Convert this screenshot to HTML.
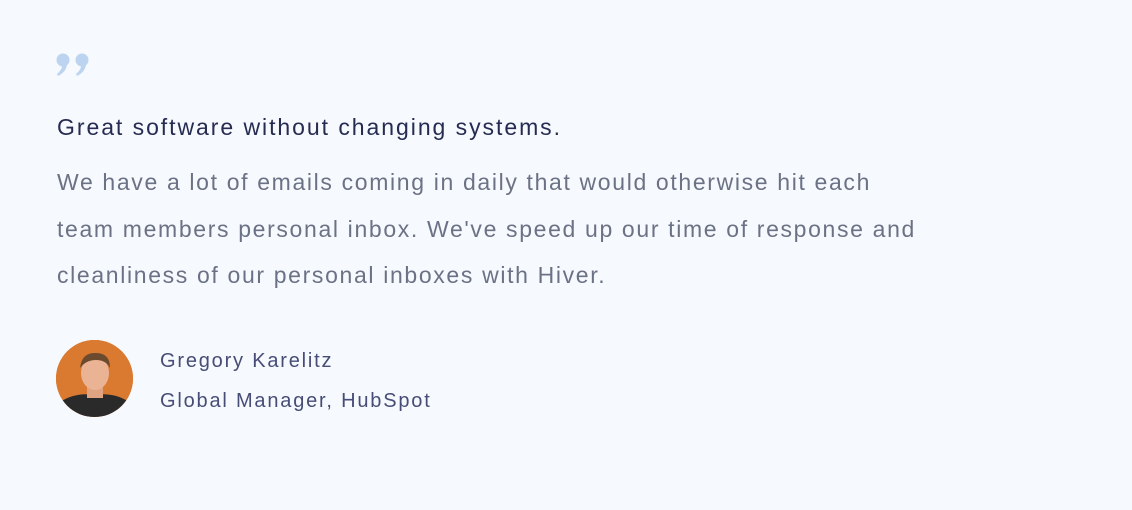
<!DOCTYPE html>
<html><head><style>
html,body{margin:0;padding:0;}
body{width:1132px;height:510px;background:#f6f9fd;font-family:"Liberation Sans",sans-serif;position:relative;overflow:hidden;}
.q{position:absolute;left:55px;top:52px;}
h1{position:absolute;left:57px;top:114px;margin:0;font-size:23px;letter-spacing:1.95px;font-weight:normal;color:#262b52;white-space:nowrap;}
.b{position:absolute;left:57px;top:159px;margin:0;font-size:23px;letter-spacing:1.65px;line-height:46.5px;color:#6b7285;white-space:nowrap;}
.av{position:absolute;left:56px;top:340px;width:77px;height:77px;border-radius:50%;overflow:hidden;background:#d9772e;}
.n{position:absolute;left:160px;font-size:20px;letter-spacing:1.8px;color:#474d77;white-space:nowrap;}
</style></head><body>
<svg class="q" width="38" height="26" viewBox="0 0 38 26"><g fill="#bcd4ef"><circle cx="8" cy="8" r="6.5"/><path d="M12 9 Q13 19 3 24 L2 22 Q8 17 7 12 Z"/><circle cx="27" cy="8" r="6.5"/><path d="M31 9 Q32 19 22 24 L21 22 Q27 17 26 12 Z"/></g></svg>
<h1>Great software without changing systems.</h1>
<p class="b">We have a lot of emails coming in daily that would otherwise hit each<br>team members personal inbox. We've speed up our time of response and<br>cleanliness of our personal inboxes with Hiver.</p>
<div class="av"><svg width="77" height="77" viewBox="0 0 77 77"><rect width="77" height="77" fill="#d97a30"/><path d="M0 77 L4 62 Q20 52 38 55 Q58 52 73 62 L77 77Z" fill="#2b2a2b"/><rect x="31" y="44" width="16" height="14" fill="#e0a482"/><ellipse cx="39" cy="33" rx="14" ry="17" fill="#eab394"/><path d="M24 28 Q26 12 40 13 Q54 13 54 28 Q50 20 40 20 Q30 20 24 28Z" fill="#6b4a2e"/></svg></div>
<div class="n" style="top:350px">Gregory Karelitz</div>
<div class="n" style="top:390px">Global Manager, HubSpot</div>
</body></html>
